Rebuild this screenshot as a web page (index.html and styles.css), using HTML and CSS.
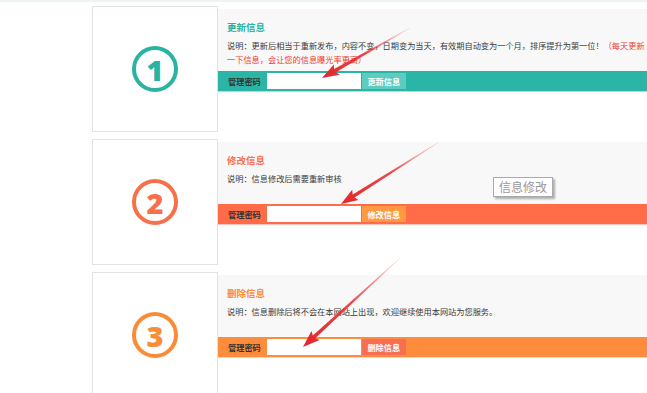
FILE: index.html
```html
<!DOCTYPE html>
<html lang="zh-CN">
<head>
	<meta charset="UTF-8">
	<meta name="viewport" content="width=device-width, initial-scale=1.0">
	<title>信息管理</title>
	<link rel="stylesheet" href="styles.css">
</head>
<body>
	<div class="top-strip"></div>
	<div class="list">
		<div class="item item-update">
			<div class="num-box">
				<span class="num">1</span>
			</div>
			<div class="panel">
				<div class="info">
					<h3 class="title">更新信息</h3>
					<p class="desc">说明：更新后相当于重新发布，内容不变，日期变为当天，有效期自动变为一个月，排序提升为第一位！<span class="hot">（每天更新一下信息，会让您的信息曝光率更高）</span></p>
				</div>
				<form class="bar">
					<label class="bar-label">管理密码</label>
					<input type="password" class="pwd">
					<button type="button" class="bar-btn">更新信息</button>
				</form>
			</div>
		</div>

		<div class="item item-edit">
			<div class="num-box">
				<span class="num">2</span>
			</div>
			<div class="panel">
				<div class="info">
					<h3 class="title">修改信息</h3>
					<p class="desc">说明：信息修改后需要重新审核</p>
				</div>
				<form class="bar">
					<label class="bar-label">管理密码</label>
					<input type="password" class="pwd">
					<button type="button" class="bar-btn">修改信息</button>
				</form>
			</div>
		</div>

		<div class="item item-delete">
			<div class="num-box">
				<span class="num">3</span>
			</div>
			<div class="panel">
				<div class="info">
					<h3 class="title">删除信息</h3>
					<p class="desc">说明：信息删除后将不会在本网站上出现，欢迎继续使用本网站为您服务。</p>
				</div>
				<form class="bar">
					<label class="bar-label">管理密码</label>
					<input type="password" class="pwd">
					<button type="button" class="bar-btn">删除信息</button>
				</form>
			</div>
		</div>
	</div>

	<div class="tip">信息修改</div>

	<svg class="arrows" width="647" height="393" viewBox="0 0 647 393">
		<defs>
			<linearGradient id="fade" x1="0" y1="0" x2="1" y2="0">
				<stop offset="0" stop-color="#ef3b3b" stop-opacity="0.15"/>
				<stop offset="0.5" stop-color="#e8282d" stop-opacity="0.85"/>
				<stop offset="1" stop-color="#e3262b"/>
			</linearGradient>
		</defs>
		<g transform="translate(322 78) rotate(150.4)">
			<polygon fill="url(#fade)" points="-101,-0.3 -15,-1.8 -17,-6 0,0 -17,6 -15,1.8 -101,0.3"/>
		</g>
		<g transform="translate(341 204) rotate(147.7)">
			<polygon fill="url(#fade)" points="-116,-0.3 -15,-1.8 -17,-6 0,0 -17,6 -15,1.8 -116,0.3"/>
		</g>
		<g transform="translate(303 347) rotate(137.5)">
			<polygon fill="url(#fade)" points="-132,-0.3 -15,-1.8 -17,-6 0,0 -17,6 -15,1.8 -132,0.3"/>
		</g>
	</svg>
</body>
</html>
```

FILE: styles.css
```css
body {
	margin: 0;
	width: 647px;
	height: 393px;
	overflow: hidden;
	position: relative;
	background: #fff;
	font-family: "Noto Sans CJK SC", "Noto Sans", sans-serif;
	color: #333;
}

.top-strip {
	height: 2px;
	background-color: #eef3f3;
}

.list {
	padding-left: 92px;
	padding-top: 4px;
}

.item {
	display: flex;
	align-items: flex-start;
	margin-bottom: 7px;
}

.num-box {
	width: 126px;
	height: 126px;
	flex: none;
	box-sizing: border-box;
	border: 1px solid #e2e2e2;
	background: #fff;
	display: flex;
	align-items: center;
	justify-content: center;
}

.num {
	width: 46px;
	height: 46px;
	box-sizing: border-box;
	border: 4px solid;
	border-radius: 50%;
	display: flex;
	align-items: center;
	justify-content: center;
	font-family: "Open Sans", "Liberation Sans", sans-serif;
	font-size: 29px;
	font-weight: 800;
	line-height: 1;
}

.panel {
	width: 440px;
	flex: none;
	margin-top: 3px;
}

.info {
	height: 62px;
	box-sizing: border-box;
	padding: 11px 0 0 9px;
	background-color: #f8f8f8;
}

.title {
	margin: 0;
	font-size: 9.5px;
	line-height: 14px;
	font-weight: bold;
}

.desc {
	margin: 4px 0 0;
	width: 422px;
	font-size: 8.2px;
	line-height: 14px;
	color: #3a3a3a;
}

.hot {
	color: #f03a2e;
}

.bar {
	display: flex;
	align-items: center;
	height: 20px;
	margin: 0;
	padding-left: 10px;
	border-bottom: 1px solid rgba(255, 255, 255, 0.6);
}

.bar-label {
	font-size: 8.2px;
	font-weight: bold;
	color: #333;
	margin-right: 6px;
}

.pwd {
	width: 94px;
	height: 16px;
	box-sizing: border-box;
	border: none;
	margin: 0;
	padding: 0 3px;
	background: #fff;
	outline: none;
}

.bar-btn {
	width: 44px;
	height: 16px;
	margin-left: 1px;
	padding: 0;
	border: none;
	color: #fff;
	font-family: inherit;
	font-size: 8.2px;
	font-weight: bold;
	cursor: pointer;
}

/* colour themes */
.item-update .num { color: #2ab3a3; }
.item-update .title { color: #2ab3a3; }
.item-update .bar { background-color: #2bb5a7; }
.item-update .bar-btn { background-color: #5ccbc0; }

.item-edit .num { color: #f7704a; }
.item-edit .title { color: #f7704a; }
.item-edit .bar { background-color: #ff6c47; }
.item-edit .bar-btn { background-color: #ff9a42; }

.item-delete .num { color: #f88c38; }
.item-delete .title { color: #f88c38; }
.item-delete .bar { background-color: #ff8c3c; }
.item-delete .bar-btn { background-color: #f76e52; }

.tip {
	position: absolute;
	left: 493px;
	top: 177px;
	width: 60px;
	height: 20px;
	box-sizing: border-box;
	border: 1px solid #aaa;
	background: #fff;
	box-shadow: 2px 2px 2px rgba(0, 0, 0, 0.3);
	color: #999;
	font-size: 12px;
	line-height: 18px;
	text-align: center;
}

.arrows {
	position: absolute;
	left: 0;
	top: 0;
	pointer-events: none;
}
```
